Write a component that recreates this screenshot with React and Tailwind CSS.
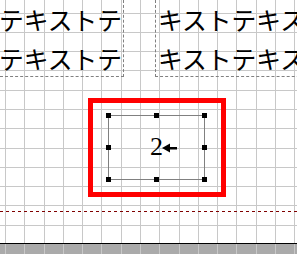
import React from 'react';

const STEP = 19.29;
const xs = Array.from({ length: 16 }, (_, k) => Math.round(5 + STEP * k) + 0.5);
const ys = Array.from({ length: 13 }, (_, k) => Math.round(12.5 + STEP * k) + 0.5).filter((y) => y < 243);

function Grid() {
  return (
    <svg className="absolute inset-0 pointer-events-none" width="297" height="254">
      {xs.map((x) => (
        <g key={x}>
          <line x1={x} y1="0" x2={x} y2="243" stroke="#c8c8c8" strokeWidth="1" />
          <line x1={x} y1="244" x2={x} y2="254" stroke="#c8c8c8" strokeWidth="1" />
        </g>
      ))}
      {ys.map((y) => (
        <line key={y} x1="0" y1={y} x2="297" y2={y} stroke="#c8c8c8" strokeWidth="1" />
      ))}
      {/* margin guide */}
      <line x1="0" y1="211.5" x2="297" y2="211.5" stroke="#800000" strokeDasharray="3 3" />
    </svg>
  );
}

function Handle({ x, y }) {
  return <div className="absolute w-[5px] h-[5px] bg-black" style={{ left: x - 2, top: y - 2 }} />;
}

function Selection() {
  const pts = [
    [108, 115], [156, 115], [204, 115],
    [108, 147], [204, 147],
    [108, 179], [156, 179], [204, 179],
  ];
  return (
    <>
      <div className="absolute left-[88px] top-[98px] w-[138px] h-[99px] border-[5px] border-[#ff0000]" />
      <div className="absolute left-[108px] top-[115px] w-[97px] h-[65px] border border-[#808080]" />
      {pts.map(([x, y]) => (
        <Handle key={`${x}-${y}`} x={x} y={y} />
      ))}
      <div className="absolute left-[150px] top-[133px] flex items-center">
        <span
          className="text-[26px] leading-[28px] text-black"
          style={{ fontFamily: '"Liberation Serif", serif' }}
        >
          2
        </span>
        <svg className="-ml-[1px] mt-[1px]" width="15" height="10">
          <polygon points="0,5 8,0.5 8,9.5" fill="#000" />
          <rect x="7" y="4" width="8" height="2.5" fill="#000" />
        </svg>
      </div>
    </>
  );
}

const jp = { fontFamily: '"Noto Sans CJK JP", sans-serif' };

function TextFrames() {
  return (
    <div
      className="absolute left-0 top-0 flex items-start text-[24.75px] leading-[38.5px] text-black whitespace-nowrap"
      style={jp}
    >
      <div className="-ml-[116px] w-[240px] text-right pr-[1px] border-r border-b border-dashed border-[#808080] h-[77px]">
        <div>テキストテキストテ</div>
        <div>テキストテキストテ</div>
      </div>
      <div className="ml-[31px] w-[160px] pl-[2px] border-l border-b border-dashed border-[#808080] h-[77px]">
        <div>キストテキスト</div>
        <div>キストテキスト</div>
      </div>
    </div>
  );
}

export default function App() {
  return (
    <div className="relative w-[297px] h-[254px] overflow-hidden bg-white flex flex-col">
      <div className="relative h-[243px] shrink-0" />
      <div className="h-[11px] border-t border-black bg-[#aaaaaa]" />
      <Grid />
      <TextFrames />
      <Selection />
    </div>
  );
}
